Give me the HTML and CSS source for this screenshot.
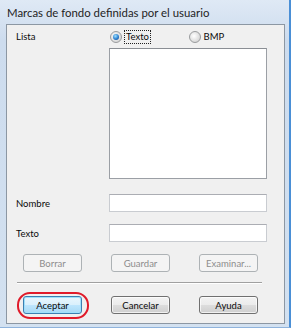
FILE: index.html
```html
<!DOCTYPE html>
<html lang="es">
<head>
  <meta charset="UTF-8" />
  <title>Marcas de fondo definidas por el usuario</title>
  <link rel="stylesheet" href="styles.css">
</head>
<body>
  <div class="window">
    <div class="title">Marcas de fondo definidas por el usuario</div>
    <div class="panel">
      <div class="form">
        <span class="label">Lista</span>
        <div class="radios">
          <span class="radio checked"><span class="dot"></span><span class="focus">Texto</span></span>
          <span class="radio"><span class="dot"></span><span>BMP</span></span>
        </div>
        <span class="row-list"></span>
        <div class="listbox row-list"></div>
        <span class="label row-name">Nombre</span>
        <div class="input row-name"></div>
        <span class="label row-text">Texto</span>
        <div class="input row-text"></div>
      </div>
      <div class="btn-row top-row">
        <button class="btn" disabled>Borrar</button>
        <button class="btn" disabled>Guardar</button>
        <button class="btn" disabled>Examinar...</button>
      </div>
      <div class="sep"></div>
      <div class="btn-row">
        <span class="marked"><button class="btn default">Aceptar</button></span>
        <button class="btn">Cancelar</button>
        <button class="btn">Ayuda</button>
      </div>
    </div>
  </div>
</body>
</html>
```

FILE: styles.css
```css
/* Reset & base */
html, body {
  margin: 0; padding: 0;
  background: #ffffff;
  font-family: Lato, "Open Sans", sans-serif;
  font-size: 9.5px;
  color: #0a0a0a;
}
/* Window frame */
.window {
  width: 291px; height: 328px;
  box-sizing: border-box;
  padding: 0 4px 3px 6px;
  background: linear-gradient(#dfe9f5, #cddcee 40px, #d3e1f0);
  border-right: 2px solid #4a8fd6;
  border-bottom: 1px solid #8fb3dc;
  display: flex; flex-direction: column;
}
.title {
  height: 24px;
  line-height: 25px;
  padding-left: 1px;
  font-size: 11.4px;
  color: #1e1e1e;
  white-space: nowrap;
}
/* Client area */
.panel {
  flex: 1;
  background: #f0f0f0;
  border: 1px solid #8c97a3;
  padding: 5px 0 0 9px;
}
.form {
  display: grid;
  grid-template-columns: 93px 158px;
  align-items: center;
}
.row-list { margin-top: 5px; }
.row-name { margin-top: 15px; }
.row-text { margin-top: 12px; }
.label { line-height: 13px; }
/* Radios */
.radios {
  display: flex;
  align-items: center;
  height: 13px;
  padding-left: 1px;
}
.radio {
  display: flex; align-items: center;
  width: 79px;
  line-height: 12px;
}
.radio .dot {
  width: 10px; height: 10px;
  border: 1px solid #9a9c9e;
  border-radius: 50%;
  background: radial-gradient(circle at 40% 40%, #ffffff, #d9d9d9 70%, #c8c8c8);
  margin-right: 3px;
  flex: none;
  position: relative;
}
.radio.checked .dot::after {
  content: "";
  position: absolute;
  left: 2px; top: 2px;
  width: 6px; height: 6px;
  border-radius: 50%;
  background: radial-gradient(circle at 40% 35%, #9fe2ff, #2a7fd0 55%, #123f80);
}
.focus {
  outline: 1px dotted #222;
  padding: 0 1px;
}
/* Fields */
.listbox {
  height: 131px;
  box-sizing: border-box;
  background: #ffffff;
  border: 1px solid #9b9fa5;
  border-top-color: #8a8e94;
}
.input {
  height: 18px;
  box-sizing: border-box;
  background: #ffffff;
  border: 1px solid #c9ccd1;
  border-top-color: #abadb3;
}
/* Buttons */
.btn-row {
  display: flex;
  gap: 29px;
  padding-left: 7px;
}
.top-row { margin-top: 12px; }
.btn {
  width: 59px; height: 18px;
  box-sizing: border-box;
  margin: 0; padding: 0;
  font-family: inherit;
  font-size: 9.5px;
  line-height: 15px;
  color: #0a0a0a;
  border: 1px solid #707070;
  border-radius: 3px;
  background: linear-gradient(#f3f3f3, #ebebeb 50%, #dddddd 50%, #cfcfcf);
  box-shadow: inset 0 0 0 1px rgba(255,255,255,0.7);
}
.btn:disabled {
  color: #8d8d8d;
  border-color: #adb2b5;
  background: #f4f4f4;
  box-shadow: none;
}
.btn.default {
  border-color: #3c7fb1;
  background: linear-gradient(#eaf6fd, #d9f0fc 50%, #bee6fd 50%, #a7d9f5);
  box-shadow: inset 0 0 0 1px #9fe0fb;
}
.sep {
  width: 245px;
  height: 0;
  margin: 10px 0 12px 1px;
  border-top: 1px solid #a0a0a0;
  border-bottom: 1px solid #ffffff;
}
/* Red highlight round the OK button */
.marked {
  position: relative;
  display: inline-flex;
}
.marked::after {
  content: "";
  position: absolute;
  left: -6px; right: -7px;
  top: -4px; bottom: -5px;
  border: 2px solid #e01b2a;
  border-radius: 13px;
  pointer-events: none;
}
```
